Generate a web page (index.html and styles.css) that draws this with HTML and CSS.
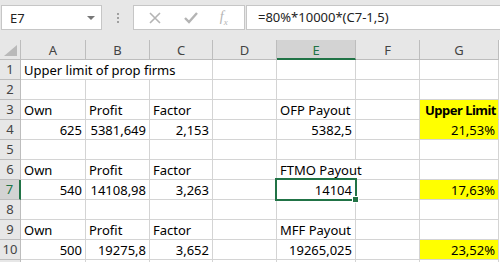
FILE: index.html
```html
<!DOCTYPE html>
<html lang="en">

<head>
    <meta charset="UTF-8">
    <title>Upper limit of prop firms</title>
    <link rel="stylesheet" href="styles.css">
</head>

<body>
    <div class="formula-bar">
        <div class="name-box">
            <span>E7</span>
            <span class="drop"></span>
        </div>
        <div class="grip"><i></i><i></i><i></i></div>
        <div class="fx-box">
            <svg width="14" height="14" viewBox="0 0 14 14"><path d="M2 2 L12 12 M12 2 L2 12" stroke="#b4b4b4" stroke-width="1.6" fill="none"/></svg>
            <svg width="16" height="14" viewBox="0 0 16 14"><path d="M2 7 L6 11 L14 2" stroke="#b4b4b4" stroke-width="2.4" fill="none"/></svg>
            <span class="fx">f<sub>x</sub></span>
        </div>
        <div class="formula">=80%*10000*(C7-1,5)</div>
    </div>

    <div class="sheet">
        <div class="corner"><span class="tri"></span></div>
        <div class="col-head">A</div>
        <div class="col-head">B</div>
        <div class="col-head">C</div>
        <div class="col-head">D</div>
        <div class="col-head active">E</div>
        <div class="col-head">F</div>
        <div class="col-head">G</div>

        <div class="row-head">1</div>
        <div class="cell span3">Upper limit of prop firms</div>
        <div class="cell"></div><div class="cell"></div><div class="cell"></div><div class="cell"></div>

        <div class="row-head">2</div>
        <div class="cell"></div><div class="cell"></div><div class="cell"></div><div class="cell"></div>
        <div class="cell"></div><div class="cell"></div><div class="cell"></div>

        <div class="row-head">3</div>
        <div class="cell">Own</div>
        <div class="cell">Profit</div>
        <div class="cell">Factor</div>
        <div class="cell"></div>
        <div class="cell">OFP Payout</div>
        <div class="cell"></div>
        <div class="cell num hl hl-top bold">Upper Limit</div>

        <div class="row-head">4</div>
        <div class="cell num">625</div>
        <div class="cell num">5381,649</div>
        <div class="cell num">2,153</div>
        <div class="cell"></div>
        <div class="cell num">5382,5</div>
        <div class="cell"></div>
        <div class="cell num hl">21,53%</div>

        <div class="row-head">5</div>
        <div class="cell"></div><div class="cell"></div><div class="cell"></div><div class="cell"></div>
        <div class="cell"></div><div class="cell"></div><div class="cell"></div>

        <div class="row-head">6</div>
        <div class="cell">Own</div>
        <div class="cell">Profit</div>
        <div class="cell">Factor</div>
        <div class="cell"></div>
        <div class="cell span2">FTMO Payout</div>
        <div class="cell"></div>

        <div class="row-head active">7</div>
        <div class="cell num">540</div>
        <div class="cell num">14108,98</div>
        <div class="cell num">3,263</div>
        <div class="cell"></div>
        <div class="cell num selected">14104</div>
        <div class="cell"></div>
        <div class="cell num hl">17,63%</div>

        <div class="row-head">8</div>
        <div class="cell"></div><div class="cell"></div><div class="cell"></div><div class="cell"></div>
        <div class="cell"></div><div class="cell"></div><div class="cell"></div>

        <div class="row-head">9</div>
        <div class="cell">Own</div>
        <div class="cell">Profit</div>
        <div class="cell">Factor</div>
        <div class="cell"></div>
        <div class="cell">MFF Payout</div>
        <div class="cell"></div>
        <div class="cell"></div>

        <div class="row-head">10</div>
        <div class="cell num">500</div>
        <div class="cell num">19275,8</div>
        <div class="cell num">3,652</div>
        <div class="cell"></div>
        <div class="cell num">19265,025</div>
        <div class="cell"></div>
        <div class="cell num hl">23,52%</div>

        <div class="row-head"></div>
        <div class="cell"></div><div class="cell"></div><div class="cell"></div><div class="cell"></div>
        <div class="cell"></div><div class="cell"></div><div class="cell"></div>
    </div>
</body>

</html>
```

FILE: styles.css
```css
body {
    margin: 0;
    width: 500px;
    height: 262px;
    overflow: hidden;
    background-color: #fff;
    font-family: 'Noto Sans', 'Liberation Sans', sans-serif;
    color: #000;
}

.formula-bar {
    display: flex;
    align-items: flex-start;
    height: 40px;
    padding-top: 5px;
    box-sizing: border-box;
    background-color: #e7e7e7;
}

.name-box {
    display: flex;
    align-items: center;
    justify-content: space-between;
    width: 101px;
    height: 25px;
    margin-left: 1px;
    padding: 0 6px 0 8px;
    box-sizing: border-box;
    background-color: #fff;
    border: 1px solid #c6c6c6;
    font-size: 13px;
    color: #222;
}

.drop {
    border-left: 4px solid transparent;
    border-right: 4px solid transparent;
    border-top: 4px solid #777;
}

.grip {
    display: flex;
    flex-direction: column;
    gap: 2px;
    width: 31px;
    padding-top: 8px;
    align-items: center;
}

.grip i {
    width: 2px;
    height: 2px;
    background-color: #a0a0a0;
}

.fx-box {
    display: flex;
    align-items: center;
    justify-content: space-around;
    width: 112px;
    height: 25px;
    padding: 0 6px 0 4px;
    box-sizing: border-box;
    background-color: #fff;
    border: 1px solid #c6c6c6;
}

.fx {
    font-family: 'Liberation Serif', serif;
    font-style: italic;
    font-size: 14px;
    color: #b4b4b4;
}

.fx sub {
    font-size: 9px;
}

.formula {
    flex: 1;
    height: 25px;
    margin-left: 1px;
    padding-left: 11px;
    box-sizing: border-box;
    background-color: #fff;
    border: 1px solid #c6c6c6;
    border-right: none;
    font-size: 13px;
    line-height: 23px;
    color: #222;
}

.sheet {
    display: grid;
    grid-template-columns: 21px 65px 64px 63px 64px 79px 64px 79px;
    grid-auto-rows: 20px;
    font-size: 13px;
}

.corner,
.col-head,
.row-head {
    background-color: #e7e7e7;
    color: #444;
    box-sizing: border-box;
}

.corner {
    position: relative;
    border-right: 1px solid #bdbdbd;
    border-bottom: 1px solid #bdbdbd;
}

.tri {
    position: absolute;
    right: 3px;
    bottom: 3px;
    border-left: 13px solid transparent;
    border-bottom: 11px solid #b9b9b9;
}

.col-head {
    text-align: center;
    line-height: 19px;
    border-right: 1px solid #bdbdbd;
    border-bottom: 1px solid #bdbdbd;
    padding-top: 1px;
}

.col-head.active {
    background-color: #d3d3d3;
    color: #217346;
    border-bottom: 2px solid #217346;
}

.row-head {
    text-align: center;
    line-height: 19px;
    border-right: 1px solid #bdbdbd;
    border-bottom: 1px solid #bdbdbd;
}

.row-head.active {
    background-color: #d3d3d3;
    color: #217346;
    border-right: 2px solid #217346;
}

.cell {
    box-sizing: border-box;
    border-right: 1px solid #d4d4d4;
    border-bottom: 1px solid #d4d4d4;
    padding: 0 3px;
    line-height: 20px;
    white-space: nowrap;
    overflow: hidden;
}

.span3 {
    grid-column: span 3;
}

.span2 {
    grid-column: span 2;
}

.num {
    text-align: right;
}

.bold {
    font-weight: bold;
    letter-spacing: -0.5px;
    padding-right: 2px;
}

.hl {
    background-color: #ffff00;
}

.hl-top {
    border-bottom-color: #ffff00;
}

.selected {
    position: relative;
    overflow: visible;
}

.selected::before {
    content: "";
    position: absolute;
    left: -2px;
    top: -2px;
    right: -2px;
    bottom: -2px;
    border: 2px solid #217346;
}

.selected::after {
    content: "";
    position: absolute;
    right: -4px;
    bottom: -4px;
    width: 5px;
    height: 5px;
    background-color: #217346;
    border: 1px solid #fff;
}
```
